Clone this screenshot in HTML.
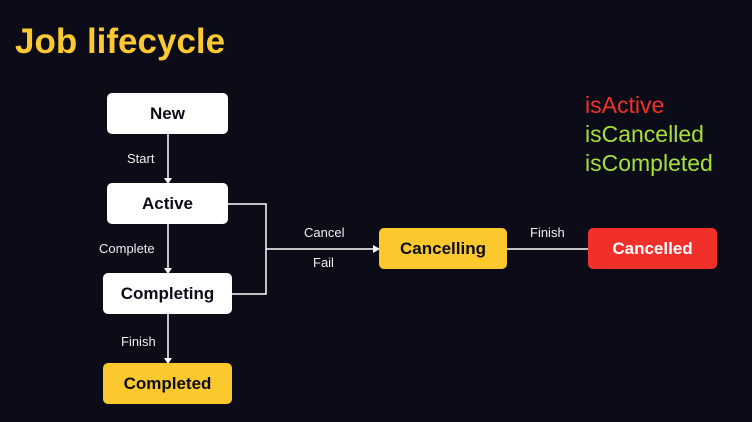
<!DOCTYPE html>
<html><head><meta charset="utf-8"><style>
*{margin:0;padding:0;box-sizing:border-box}
body{width:752px;height:422px;background:#0b0c17;position:relative;overflow:hidden;font-family:"Liberation Sans",sans-serif}
.t{position:absolute;left:15px;top:22px;font-size:35px;font-weight:bold;color:#fcc932}
.b{position:absolute;border-radius:5px;display:flex;align-items:center;justify-content:center;font-weight:bold;font-size:17px;color:#0b0c17}
.w{background:#fff}.y{background:#fbc92e}.r{background:#f2302a;color:#fff}
.l{position:absolute;color:#eee;font-size:13px}
.s{position:absolute;left:585px;font-size:23px}
</style></head><body>
<div class="t">Job lifecycle</div>
<svg width="752" height="422" style="position:absolute;left:0;top:0">
<g stroke="#fff" stroke-width="1.5" fill="none">
<line x1="168" y1="134" x2="168" y2="180"/>
<line x1="168" y1="224" x2="168" y2="270"/>
<line x1="168" y1="314" x2="168" y2="360"/>
<polyline points="228,204 266,204 266,294 232,294"/>
<line x1="266" y1="249" x2="376" y2="249"/>
<line x1="507" y1="249" x2="588" y2="249"/>
</g>
<g fill="#fff">
<polygon points="164,178 172,178 168,184"/>
<polygon points="164,268 172,268 168,274"/>
<polygon points="164,358 172,358 168,364"/>
<polygon points="373,245 373,253 380,249"/>
</g>
</svg>
<div class="b w" style="left:107px;top:93px;width:121px;height:41px">New</div>
<div class="b w" style="left:107px;top:183px;width:121px;height:41px">Active</div>
<div class="b w" style="left:103px;top:273px;width:129px;height:41px">Completing</div>
<div class="b y" style="left:103px;top:363px;width:129px;height:41px">Completed</div>
<div class="b y" style="left:379px;top:228px;width:128px;height:41px">Cancelling</div>
<div class="b r" style="left:588px;top:228px;width:129px;height:41px">Cancelled</div>
<div class="l" style="left:127px;top:151px">Start</div>
<div class="l" style="left:99px;top:241px">Complete</div>
<div class="l" style="left:121px;top:334px">Finish</div>
<div class="l" style="left:304px;top:225px">Cancel</div>
<div class="l" style="left:313px;top:255px">Fail</div>
<div class="l" style="left:530px;top:225px">Finish</div>
<div class="s" style="top:92px;color:#f2302a">isActive</div>
<div class="s" style="top:121px;color:#a6e03a">isCancelled</div>
<div class="s" style="top:150px;color:#a6e03a">isCompleted</div>
</body></html>
